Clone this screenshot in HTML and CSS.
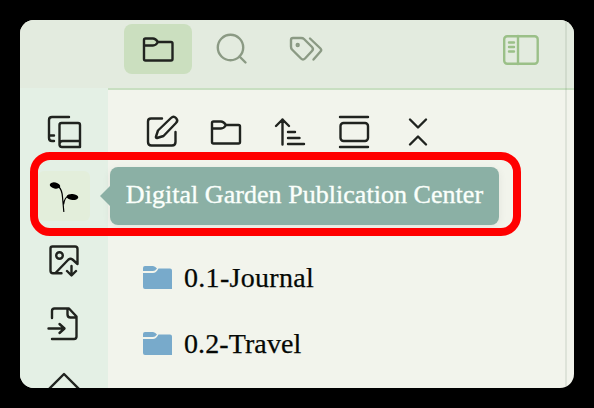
FILE: index.html
```
<!DOCTYPE html>
<html lang="en">
<head>
<meta charset="utf-8">
<title>Vault</title>
<link rel="stylesheet" href="styles.css">
</head>
<body>
<main class="window">
  <header class="tabs">
    <button class="tab active" aria-label="Files"><svg viewBox="138 29 40 40"><path d="M144 40q0-1.500 1.500-1.500h7.500q2.500 0 5 3.500h13q1.500 0 1.500 1.500v15.500q0 1.500-1.500 1.500h-25.500q-1.500 0-1.500-1.500zM144 45.500h9q3 0 5-3.500"/></svg></button>
    <button class="tab" aria-label="Search"><svg viewBox="212 29 40 40"><circle cx="230.500" cy="47.500" r="12.700"/><path d="m239.500 56.500 6 6"/></svg></button>
    <button class="tab" aria-label="Tags"><svg viewBox="286 29 40 40"><path d="M291 40q0-2 2-2h8q2 0 3 1l8 8q2 2 0 4l-7 7.500q-2 2-4 0l-9-9q-1-1-1-3zM310 38.500l10.500 10q1.500 1.500 0 3l-7 8"/><circle cx="297.700" cy="45" r="1" /></svg></button>
    <button class="toggle" aria-label="Toggle sidebar"><svg viewBox="501 29 40 40"><rect x="504.200" y="36.200" width="33.500" height="27.500" rx="3"/><path d="M518 36v28M509 42.500h5M509 47h5M509 51.500h5"/></svg></button>
  </header>
  <div class="body">
    <nav class="rail">
      <button aria-label="Switch"><svg viewBox="44 112 40 40"><path d="M69 117H52q-3 0-3 3v18q0 3 3 3h2M49 135.500h5M61.500 123H78q2 0 2 2v22H62q-2.500 0-2.500-2.500V125q0-2 2-2zM59.500 144q0-3 3-3H80"/></svg></button>
      <button class="selected" aria-label="Digital garden"><svg class="sprout" viewBox="44 176 40 40"><path class="stem" d="M59 187q3 3 3.500 10l1.300 14.500M63.700 204q1-7 5-8"/><ellipse class="leaf" cx="55" cy="185.500" rx="5.300" ry="3" transform="rotate(12 55 185.500)"/><ellipse class="leaf" cx="72.500" cy="197" rx="5.800" ry="3" transform="rotate(5 72.500 197)"/></svg></button>
      <button aria-label="Download images"><svg viewBox="44 241 40 40"><path d="M61.500 273.200H53q-2.500 0-2.500-2.500V248.500q0-2 2-2H75q2.500 0 2.500 2.500v15l-5-4.500q-2-1.500-4 0l-13 13.500M71.500 266v9M67 271l4.500 4.500 4.500-4.500"/><circle cx="59.500" cy="255.500" r="3.300"/></svg></button>
      <button aria-label="Import file"><svg viewBox="44 305 40 40"><path d="M52 318v-7q0-2.500 2.500-2.500H69l7.500 8v20q0 2.500-2.500 2.500H52M67.500 308.500v6q0 3 3 3H76M48.500 328.500H64M59.500 324l5 4.500-5 4.500"/></svg></button>
      <button aria-label="More"><svg viewBox="44 369 40 40"><path d="m49 389 15-15 15 15-15 15z"/></svg></button>
    </nav>
    <section class="files">
      <div class="toolbar">
        <button aria-label="New note"><svg viewBox="142 112 40 40"><path d="M162 118.500H151q-3 0-3 3V142q0 3.500 3.500 3.500H172q3.500 0 3.500-3.500V132M158 130.500l13-12.500q2.500-2.500 5 0t0 5l-12.500 13-6.500 2q-1.500 0-1-1.500z"/></svg></button>
        <button aria-label="New folder"><svg viewBox="206 112 40 40"><path d="M212 123q0-1.500 1.500-1.500h7.500q2.500 0 5 3.500h12.500q1.500 0 1.500 1.500v15.500q0 1.500-1.500 1.500h-25q-1.500 0-1.500-1.500zM212 128.500h9q3 0 5-3.500"/></svg></button>
        <button aria-label="Sort"><svg viewBox="270 112 40 40"><path d="M282.500 144.500V119.500M276 126l6.500-6.500 6.500 6.500M288 132h7M288 138h11.500M288 144h16"/></svg></button>
        <button aria-label="Reveal"><svg viewBox="334 112 40 40"><path d="M340 117h28M340 147h28"/><rect x="340.500" y="123" width="27.500" height="18" rx="3"/></svg></button>
        <button aria-label="Collapse"><svg viewBox="398 112 40 40"><path d="m410 119.500 8 8 8-8M410 144.500l8-8 8 8"/></svg></button>
      </div>
      <ul class="tree">
        <li><svg class="folder" viewBox="143 266 30 24"><path d="M143 268q0-2 2-2h8q2 0 4 2.500-2 2.500-4 2.500h-10zM143 273h10q3 0 5.500-4.500H170q2 0 2 2V289h-27q-2 0-2-2z"/></svg><span>0.1-Journal</span></li>
        <li><svg class="folder" viewBox="143 266 30 24"><path d="M143 268q0-2 2-2h8q2 0 4 2.500-2 2.500-4 2.500h-10zM143 273h10q3 0 5.500-4.500H170q2 0 2 2V289h-27q-2 0-2-2z"/></svg><span class="travel">0.2-Travel</span></li>
      </ul>
    </section>
  </div>
  <div class="divider"></div>
</main>
<div class="tooltip"><span>Digital Garden Publication Center</span></div>
<div class="highlight"></div>
</body>
</html>
```
FILE: styles.css
```
* { box-sizing: border-box; }
body {
  margin: 0;
  width: 594px;
  height: 408px;
  padding: 20px;
  background: #000;
  overflow: hidden;
  font-family: "Liberation Serif", serif;
}
.window {
  position: relative;
  width: 554px;
  height: 368px;
  border-radius: 14px;
  overflow: hidden;
  background: #f2f4ec;
}
button {
  display: flex;
  align-items: center;
  justify-content: center;
  padding: 0;
  border: 0;
  background: none;
  color: #20231f;
}
button svg {
  width: 40px;
  height: 40px;
  fill: none;
  stroke: currentColor;
  stroke-width: 2.4;
  stroke-linecap: round;
  stroke-linejoin: round;
}
.tabs {
  display: flex;
  gap: 6px;
  height: 68px;
  padding: 4px 33px 0 104px;
  background: #e3ebdf;
}
.tab { width: 68px; height: 50px; color: #8b9a84; border-radius: 8px; }
.tab.active { background: #cbdfbf; color: #20231f; }
.toggle { height: 50px; margin-left: auto; color: #9bc088; }
.body { display: flex; height: 300px; }
.rail {
  width: 88px;
  flex: none;
  padding-top: 12px;
  background: #e4f0e5;
}
.rail button { width: 88px; height: 64px; }
.rail .selected {
  width: 52px;
  height: 50px;
  margin: 7px 18px 8px;
  border-radius: 6px;
  background: #e3eedb;
}
.sprout .stem { stroke: #000; stroke-width: 1.2; }
.sprout .leaf { fill: #000; stroke: none; }
.files { flex: 1; border-top: 2px solid #c8dfc1; }
.toolbar {
  display: flex;
  gap: 24px;
  padding: 22px 0 0 34px;
}
.tree { margin: 93px 0 0; padding: 0 0 0 35px; list-style: none; }
.tree li {
  display: flex;
  align-items: center;
  gap: 11px;
  height: 66px;
  color: #050805;
  font-size: 28px;
  letter-spacing: .3px;
  -webkit-text-stroke: .25px currentColor;
}
.tree .travel { letter-spacing: .1px; }
.folder { width: 30px; height: 24px; fill: #78aacb; }
.divider {
  position: absolute;
  top: 0;
  right: 7px;
  width: 2px;
  height: 100%;
  background: rgba(80, 110, 80, .12);
}
.tooltip {
  position: absolute;
  left: 110px;
  top: 167px;
  width: 389px;
  height: 58px;
  padding: 0 15px 2px;
  display: flex;
  align-items: center;
  justify-content: center;
  white-space: nowrap;
  border-radius: 8px;
  background: #8bb0a5;
  color: #fafffb;
  font-size: 26px;
  letter-spacing: .04px;
  -webkit-text-stroke: .35px currentColor;
  box-shadow: 0 2px 9px rgba(0, 0, 0, .07);
}
.tooltip::before {
  content: "";
  position: absolute;
  left: -10px;
  top: 19px;
  border: solid transparent;
  border-width: 10px 10px 10px 0;
  border-right-color: #8bb0a5;
}
.highlight {
  position: absolute;
  left: 30px;
  top: 152px;
  width: 491px;
  height: 84px;
  border: 8px solid #f00;
  border-radius: 20px;
}
```
